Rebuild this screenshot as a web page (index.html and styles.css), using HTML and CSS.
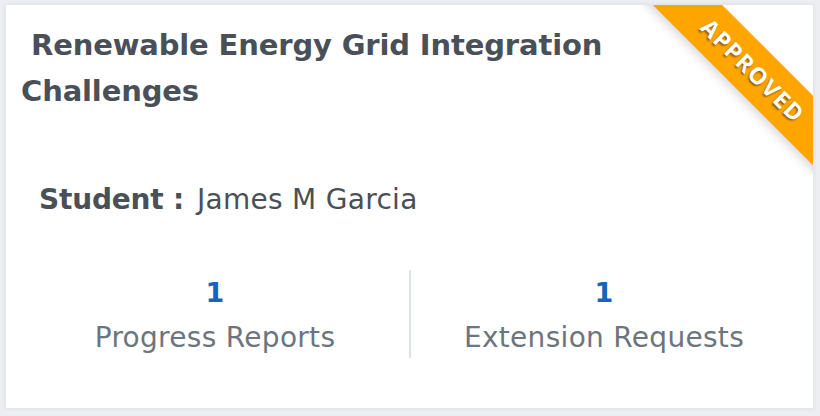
FILE: index.html
```html
<!DOCTYPE html>
<html>
<head>
    <title>Project Card</title>
    <meta name="viewport" content="width=device-width, initial-scale=1.0">
    <link rel="stylesheet" href="styles.css">
</head>
<body>
    <div class="card">
        <div class="ribbon-wrap">
            <span class="ribbon">Approved</span>
        </div>
        <h2 class="card-title">&nbsp;Renewable Energy Grid Integration Challenges</h2>
        <div class="student">
            <span class="student-label">Student :</span>
            <span class="student-name">James M Garcia</span>
        </div>
        <div class="stats">
            <div class="stat">
                <div class="stat-value">1</div>
                <div class="stat-label">Progress Reports</div>
            </div>
            <div class="stat">
                <div class="stat-value">1</div>
                <div class="stat-label">Extension Requests</div>
            </div>
        </div>
    </div>
</body>
</html>
```

FILE: styles.css
```css
:root {
    --page-bg: #eceef1;
    --card-bg: #ffffff;
    --card-border: #e3e6ea;
    --text-dark: #495057;
    --text-muted: #6c757d;
    --accent: #1565c0;
    --ribbon: #ffa500;
    --divider: #dee2e6;
}

body {
    font-family: 'DejaVu Sans', sans-serif;
    margin: 0;
    padding: 4px 6px 7px 5px;
    background-color: var(--page-bg);
    color: var(--text-dark);
}

.card {
    position: relative;
    background-color: var(--card-bg);
    border: 1px solid var(--card-border);
    box-shadow: 0 0 4px rgba(0,0,0,0.06);
    padding: 17px 16px 50px 15px;
}

.ribbon-wrap {
    position: absolute;
    top: 0;
    right: 0;
    width: 170px;
    height: 170px;
    overflow: hidden;
}

.ribbon {
    position: absolute;
    left: -20px;
    top: 41px;
    width: 260px;
    height: 49px;
    line-height: 49px;
    text-align: center;
    background-color: var(--ribbon);
    color: #fff;
    font-family: 'Open Sans', sans-serif;
    font-weight: 700;
    font-size: 23px;
    letter-spacing: 1.5px;
    text-transform: uppercase;
    text-shadow: 0 2px 2px rgba(0,0,0,0.45);
    box-shadow: 0 4px 10px rgba(0,0,0,0.15);
    transform: rotate(45deg);
}

.card-title {
    margin: 0;
    max-width: 600px;
    font-size: 29px;
    font-weight: 700;
    letter-spacing: -0.15px;
    line-height: 46px;
}

.student {
    margin-top: 68px;
    padding-left: 18px;
    font-size: 28px;
    line-height: 36px;
}

.student-label {
    font-weight: 700;
    margin-right: 4px;
    letter-spacing: -0.2px;
}

.student-name {
    letter-spacing: 0.3px;
}

.stats {
    display: grid;
    grid-template-columns: 1fr 1fr;
    margin-top: 52px;
}

.stat {
    text-align: center;
    padding: 7px 0 2px;
}

.stat + .stat {
    border-left: 2px solid var(--divider);
}

.stat-value {
    font-size: 27px;
    font-weight: 700;
    line-height: 32px;
    color: var(--accent);
}

.stat-label {
    margin-top: 11px;
    font-size: 28px;
    letter-spacing: 0.3px;
    line-height: 36px;
    color: var(--text-muted);
}
```
